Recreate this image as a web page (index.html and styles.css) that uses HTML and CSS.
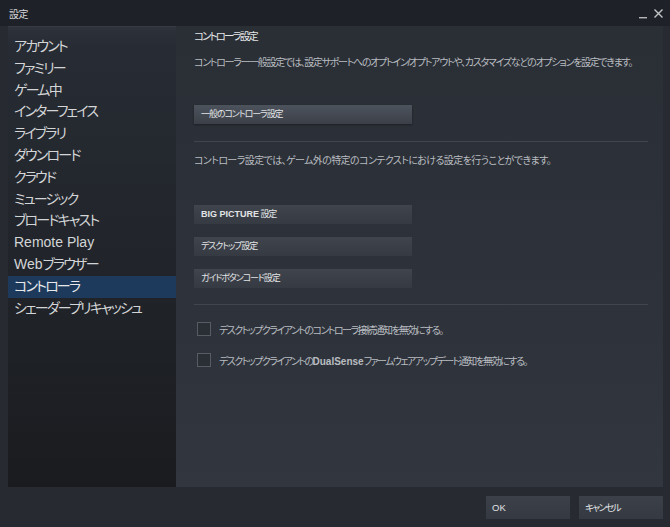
FILE: index.html
```html
<!DOCTYPE html>
<html lang="ja">
<head>
<meta charset="utf-8">
<title>設定</title>
<link rel="stylesheet" href="styles.css">
</head>
<body>
<div class="window">
  <div class="titlebar">
    <span class="title">設定</span>
    <div class="winctl">
      <svg class="min" width="9" height="9" viewBox="0 0 9 9"><rect x="0" y="7" width="8" height="1.4" fill="#b4b6b9"/></svg>
      <svg class="close" width="11" height="11" viewBox="0 0 11 11"><path d="M1.5 1.5 L9.5 9.5 M9.5 1.5 L1.5 9.5" stroke="#c2c4c6" stroke-width="1.4" fill="none"/></svg>
    </div>
  </div>
  <div class="main">
    <nav class="sidebar">
      <div class="nav-item">アカウント</div>
      <div class="nav-item">ファミリー</div>
      <div class="nav-item">ゲーム中</div>
      <div class="nav-item">インターフェイス</div>
      <div class="nav-item">ライブラリ</div>
      <div class="nav-item">ダウンロード</div>
      <div class="nav-item">クラウド</div>
      <div class="nav-item">ミュージック</div>
      <div class="nav-item">ブロードキャスト</div>
      <div class="nav-item"><span class="latin">Remote Play</span></div>
      <div class="nav-item"><span class="latin">Web</span>ブラウザー</div>
      <div class="nav-item active">コントローラ</div>
      <div class="nav-item">シェーダープリキャッシュ</div>
    </nav>
    <section class="content">
      <h1 class="heading">コントローラ設定</h1>
      <p class="desc first">コントローラー一般設定では、設定サポートへのオプトイン/オプトアウトや、カスタマイズなどのオプションを設定できます。</p>
      <div class="btn wide general">一般のコントローラ設定</div>
      <div class="sep sep1"></div>
      <p class="desc second">コントローラ設定では、ゲーム外の特定のコンテクストにおける設定を行うことができます。</p>
      <div class="btn-stack">
        <div class="btn wide"><span class="latin">BIG PICTURE</span> 設定</div>
        <div class="btn wide">デスクトップ設定</div>
        <div class="btn wide">ガイドボタンコード設定</div>
      </div>
      <div class="sep sep2"></div>
      <label class="check c1"><span class="box"></span><span class="label">デスクトップクライアントのコントローラ接続通知を無効にする。</span></label>
      <label class="check c2"><span class="box"></span><span class="label">デスクトップクライアントの<span class="latin">DualSense</span>ファームウェアアップデート通知を無効にする。</span></label>
    </section>
  </div>
  <div class="footer">
    <div class="fbtn"><span class="latin">OK</span></div>
    <div class="fbtn">キャンセル</div>
  </div>
</div>
</body>
</html>
```

FILE: styles.css
```css
* { box-sizing: border-box; }
html, body { margin: 0; padding: 0; }
body {
  width: 670px;
  height: 527px;
  overflow: hidden;
  background: #272a30;
  font-family: "Liberation Sans", "Noto Sans CJK JP", sans-serif;
  font-feature-settings: "palt";
  color: #dcdedf;
}
.window { width: 670px; height: 527px; display: flex; flex-direction: column; }
.latin { letter-spacing: 0; }

.titlebar {
  height: 26px;
  flex: none;
  background: #1e2128;
  display: flex;
  align-items: center;
  justify-content: space-between;
  padding: 0 6px 0 9px;
}
.title { font-size: 10px; color: #d6d8da; letter-spacing: -0.5px; }
.winctl { display: flex; align-items: center; gap: 5px; }
.winctl .min { margin-top: 2px; }

.main {
  height: 461px;
  flex: none;
  display: flex;
  padding: 0 7px 0 8px;
}
.sidebar {
  flex: none;
  width: 168px;
  padding-top: 9px;
  background: linear-gradient(180deg, #2d323b 0px, #272b33 20px, #22262c 200px, #1b1d21 420px, #191b1e 100%);
  border-top: 1px solid #363b44;
  overflow: hidden;
}
.nav-item {
  height: 21.8px;
  line-height: 21.8px;
  padding-left: 6px;
  font-size: 14px;
  letter-spacing: -1.8px;
  color: #d3d5d7;
  white-space: nowrap;
}
.nav-item.active { background: #1d3a5c; color: #e6e8ea; }

.content {
  flex: 1;
  min-width: 0;
  overflow: hidden;
  padding: 3px 15px 0 18px;
  background: linear-gradient(180deg, #2a2e35 0%, #2d3139 50%, #31363f 100%);
}
.heading {
  margin: 0;
  font-size: 10.5px;
  line-height: 14px;
  font-weight: normal;
  letter-spacing: -1.9px;
  color: #e4e6e8;
}
.desc {
  margin: 0;
  font-size: 10px;
  line-height: 14px;
  color: #b9bdc1;
  white-space: nowrap;
}
.desc.first { margin-top: 13px; letter-spacing: -1.3px; }
.desc.second { margin-top: 12px; letter-spacing: -0.6px; }

.btn {
  height: 19px;
  line-height: 19px;
  padding-left: 7px;
  font-size: 9px;
  letter-spacing: -1.1px;
  color: #e2e4e6;
  background: linear-gradient(180deg, #3f444d 0%, #363a42 100%);
  white-space: nowrap;
}
.btn .latin { font-weight: bold; font-size: 9px; }
.btn.wide { width: 218px; }
.btn.general {
  margin-top: 35px;
  background: linear-gradient(180deg, #4d535d 0%, #3b4048 100%);
  box-shadow: 0 1px 2px rgba(0,0,0,0.35);
}
.btn-stack { margin-top: 37px; display: flex; flex-direction: column; gap: 13px; }

.sep { height: 1px; background: #40454e; }
.sep1 { margin-top: 17px; }
.sep2 { margin-top: 16px; }

.check {
  display: flex;
  align-items: center;
  height: 14px;
  padding-left: 3px;
}
.check.c1 { margin-top: 17px; }
.check.c2 { margin-top: 17px; }
.box {
  width: 14px;
  height: 14px;
  border: 1px solid #575c64;
  background: #2a2e35;
  flex: none;
}
.label {
  margin-left: 8px;
  font-size: 10px;
  letter-spacing: -1.55px;
  color: #b9bdc1;
  white-space: nowrap;
}
.label .latin { font-weight: bold; }

.footer {
  height: 40px;
  flex: none;
  display: flex;
  justify-content: flex-end;
  gap: 9px;
  padding: 9px 7px 0 0;
}
.fbtn {
  width: 84px;
  height: 23px;
  line-height: 23px;
  padding-left: 6px;
  font-size: 9.5px;
  letter-spacing: -1.6px;
  color: #e0e2e4;
  background: linear-gradient(180deg, #3b4049 0%, #353a42 100%);
}
```
